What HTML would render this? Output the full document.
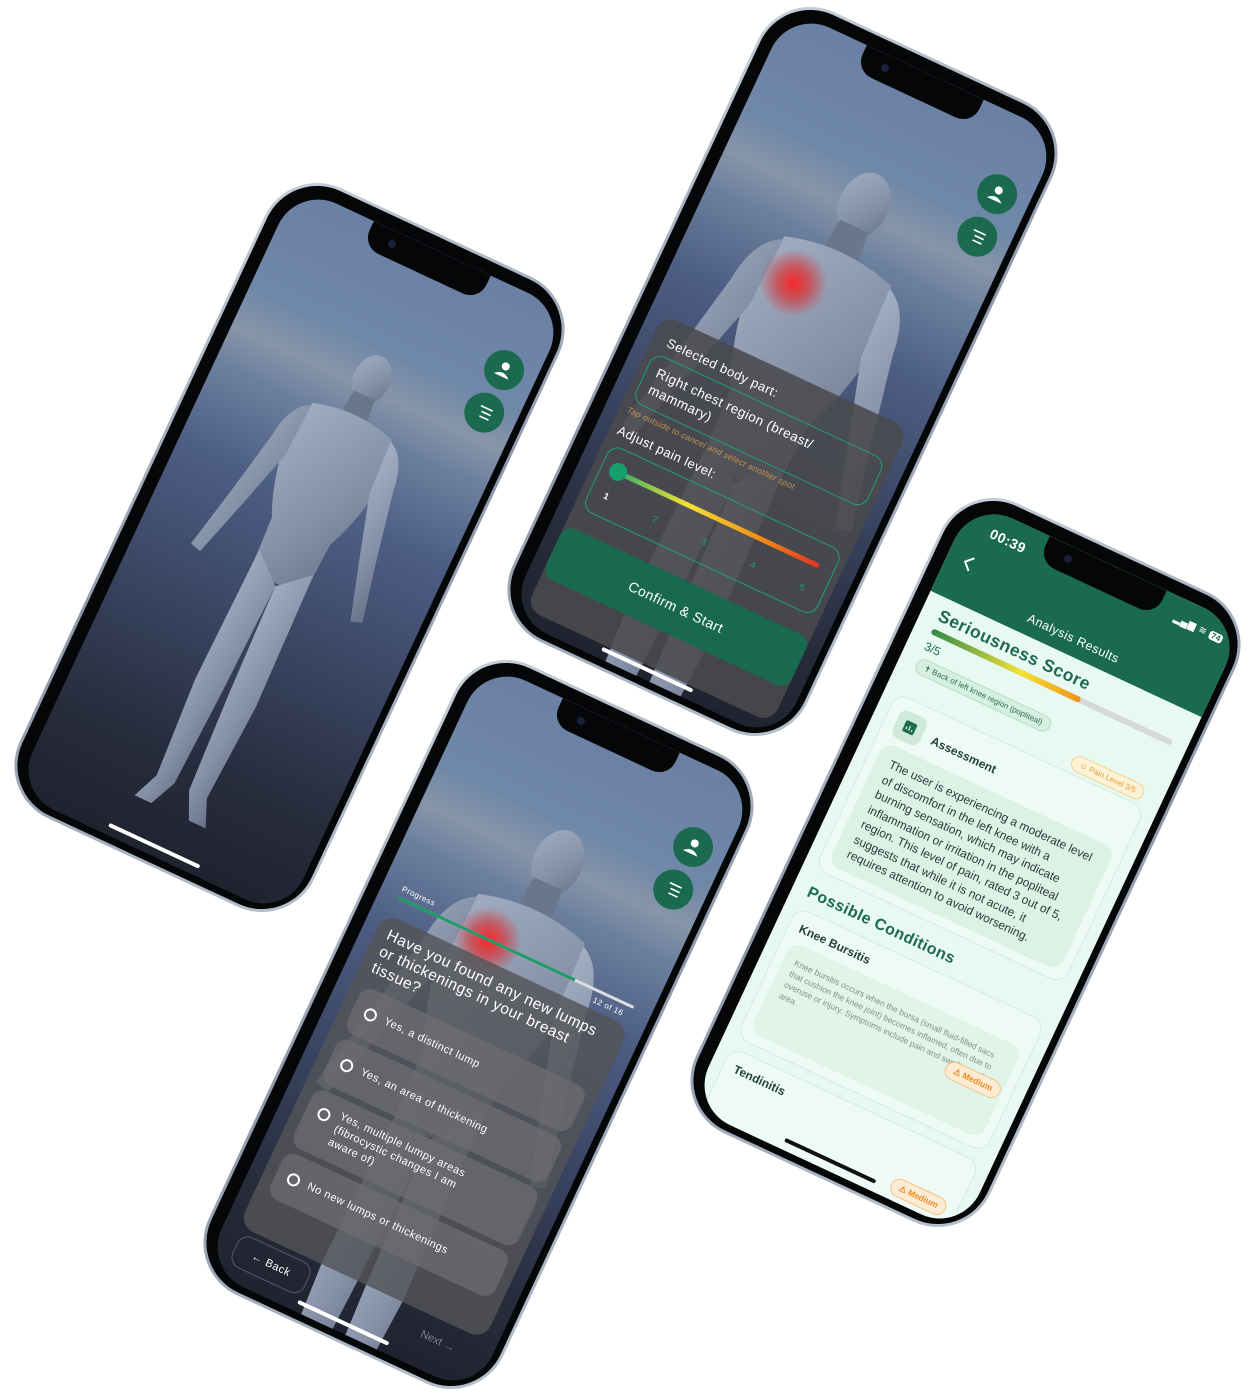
<!DOCTYPE html>
<html><head><meta charset="utf-8">
<style>
*{box-sizing:border-box;margin:0;padding:0}
html,body{width:1258px;height:1398px;overflow:hidden}
body{background:#fff;position:relative;font-family:"Liberation Sans",sans-serif}
.phone{position:absolute;width:325px;height:695px;border-radius:58px;background:linear-gradient(135deg,#c9d1dc,#8d98a9 50%,#b8c2cf);transform:rotate(25deg);transform-origin:50% 50%}
.body{position:absolute;inset:3px;border-radius:55px;background:#050608}
.screen{position:absolute;left:13px;top:13px;width:299px;height:669px;border-radius:44px;overflow:hidden}
.notch{position:absolute;left:85px;top:0;width:129px;height:28px;background:#050608;border-radius:0 0 18px 18px;z-index:20}
.notch:after{content:"";position:absolute;left:22px;top:9px;width:8px;height:8px;border-radius:50%;background:#1a1f3a}
.sky{background:linear-gradient(180deg,#6a80a4 0%,#7088a8 17%,#8795a8 23%,#6c809e 29%,#4d5e84 42%,#38435f 65%,#272c3c 85%,#20232f 100%)}
.home{position:absolute;left:100px;bottom:8px;width:100px;height:4px;border-radius:2px;background:#fff;z-index:20}
.fab{position:absolute;width:40px;height:40px;border-radius:50%;background:#1b6a50;z-index:10}
.abs{position:absolute}
.w{color:#fff;letter-spacing:.5px}
</style></head><body>

<svg width="0" height="0" style="position:absolute">
<defs>
<linearGradient id="fg" x1="0" y1="0" x2="1" y2="1"><stop offset="0" stop-color="#a3aec2"/><stop offset=".6" stop-color="#8590a6"/><stop offset="1" stop-color="#67728a"/></linearGradient>
<g id="man">
<ellipse cx="100" cy="30" rx="16" ry="22" fill="url(#fg)"/>
<path d="M90,45 L110,45 L112,66 L88,66Z" fill="#6b768a"/>
<path d="M62,70 Q100,58 138,70 L146,110 Q140,150 128,175 L126,215 Q100,236 74,215 L72,175 Q60,150 54,110Z" fill="url(#fg)"/>
<path d="M62,72 Q45,80 42,110 L30,170 L18,225 L28,228 L44,175 L60,120Z" fill="url(#fg)"/>
<path d="M138,72 Q155,80 158,110 L170,170 L182,225 L172,228 L156,175 L140,120Z" fill="url(#fg)"/>
<path d="M74,205 L100,228 L97,330 L93,420 L82,444 L66,444 L76,420 L71,330Z" fill="url(#fg)"/>
<path d="M126,205 L100,228 L103,330 L107,420 L118,444 L134,444 L124,420 L129,330Z" fill="url(#fg)"/>
</g>
<radialGradient id="glow"><stop offset="0" stop-color="#ff2020" stop-opacity=".95"/><stop offset=".5" stop-color="#e02828" stop-opacity=".6"/><stop offset="1" stop-color="#e02828" stop-opacity="0"/></radialGradient>
</defs></svg>

<!-- PHONE 1 -->
<div class="phone" style="left:127px;top:200px">
<div class="body"><div class="screen sky">
<div class="notch"></div>
<svg class="abs" style="left:30px;top:110px" width="240" height="530" viewBox="0 0 200 460"><use href="#man"/></svg>
<div class="fab" style="left:246px;top:60px"><svg width="40" height="40"><circle cx="20" cy="16" r="4" fill="#fff"/><path d="M12,27 Q20,19 28,27Z" fill="#fff"/></svg></div>
<div class="fab" style="left:246px;top:107px"><svg width="40" height="40" stroke="#fff" stroke-width="1.6"><path d="M14,15h13M17,20h10M17,25h10"/></svg></div>
<div class="home"></div>
</div></div></div>

<!-- PHONE 2 -->
<div class="phone" style="left:620px;top:24px">
<div class="body"><div class="screen sky">
<div class="notch"></div>
<svg class="abs" style="left:-5px;top:100px" width="310" height="710" viewBox="0 0 200 460"><use href="#man"/><circle cx="80" cy="95" r="22" fill="url(#glow)"/></svg>
<div class="fab" style="left:246px;top:60px"><svg width="40" height="40"><circle cx="20" cy="16" r="4" fill="#fff"/><path d="M12,27 Q20,19 28,27Z" fill="#fff"/></svg></div>
<div class="fab" style="left:246px;top:107px"><svg width="40" height="40" stroke="#fff" stroke-width="1.6"><path d="M14,15h13M17,20h10M17,25h10"/></svg></div>
<div class="abs" style="left:14px;top:330px;width:271px;height:325px;border-radius:16px;background:rgba(74,74,77,.88)"></div>
<div class="abs w" style="left:30px;top:346px;font-size:13px">Selected body part:</div>
<div class="abs w" style="left:22px;top:368px;width:256px;height:54px;border:1px solid #1fa06f;border-radius:12px;padding:8px 40px 8px 10px;font-size:13.5px;line-height:18px">Right chest region (breast/ mammary)</div>
<div class="abs" style="left:22px;top:426px;font-size:8.5px;font-style:italic;color:#c7924c;letter-spacing:.3px">Tap outside to cancel and select another spot</div>
<div class="abs w" style="left:22px;top:446px;font-size:13px">Adjust pain level:</div>
<div class="abs" style="left:22px;top:469px;width:256px;height:72px;border:1px solid #1fa06f;border-radius:12px">
 <div class="abs" style="left:14px;top:20px;width:225px;height:5px;border-radius:3px;background:linear-gradient(90deg,#2eaa6a,#f2e234 35%,#f39018 70%,#e23222)"></div>
 <div class="abs" style="left:8px;top:13px;width:18px;height:18px;border-radius:50%;background:#16a06e"></div>
 <div class="abs w" style="left:14px;top:44px;font-size:9px;font-weight:bold">1</div>
 <div class="abs" style="left:68px;top:44px;font-size:9px;color:#1fa06f">2</div>
 <div class="abs" style="left:122px;top:44px;font-size:9px;color:#1fa06f">3</div>
 <div class="abs" style="left:176px;top:44px;font-size:9px;color:#1fa06f">4</div>
 <div class="abs" style="left:230px;top:44px;font-size:9px;color:#1fa06f">5</div>
</div>
<div class="abs w" style="left:14px;top:562px;width:271px;height:56px;border-radius:12px;background:#19694f;text-align:center;line-height:56px;font-size:14px">Confirm &amp; Start</div>
<div class="home"></div>
</div></div></div>

<!-- PHONE 3 -->
<div class="phone" style="left:316px;top:677px">
<div class="body"><div class="screen sky">
<div class="notch"></div>
<svg class="abs" style="left:-5px;top:105px" width="310" height="710" viewBox="0 0 200 460"><use href="#man"/><circle cx="80" cy="95" r="22" fill="url(#glow)"/></svg>
<div class="fab" style="left:246px;top:60px"><svg width="40" height="40"><circle cx="20" cy="16" r="4" fill="#fff"/><path d="M12,27 Q20,19 28,27Z" fill="#fff"/></svg></div>
<div class="fab" style="left:246px;top:107px"><svg width="40" height="40" stroke="#fff" stroke-width="1.6"><path d="M14,15h13M17,20h10M17,25h10"/></svg></div>
<div class="abs w" style="left:20px;top:236px;font-size:8px">Progress</div>
<div class="abs" style="left:20px;top:249px;width:260px;height:3px;background:#ddd;border-radius:2px"><div style="width:75%;height:3px;background:#1c9a68"></div></div>
<div class="abs w" style="left:240px;top:256px;font-size:8px">12 of 16</div>
<div class="abs" style="left:14px;top:270px;width:271px;height:345px;border-radius:16px;background:rgba(84,84,88,.82)"></div>
<div class="abs w" style="left:26px;top:280px;width:235px;font-size:15.5px;line-height:18px">Have you found any new lumps or thickenings in your breast tissue?</div>
<div class="abs" style="left:26px;top:344px;width:248px;height:50px;border-radius:12px;background:rgba(110,110,114,.7)"></div>
<div class="abs" style="left:26px;top:400px;width:248px;height:50px;border-radius:12px;background:rgba(110,110,114,.7)"></div>
<div class="abs" style="left:26px;top:456px;width:248px;height:64px;border-radius:12px;background:rgba(110,110,114,.7)"></div>
<div class="abs" style="left:26px;top:526px;width:248px;height:50px;border-radius:12px;background:rgba(110,110,114,.7)"></div>
<div class="abs" style="left:38px;top:362px;width:13px;height:13px;border:2px solid #fff;border-radius:50%"></div>
<div class="abs w" style="left:60px;top:362px;font-size:11px">Yes, a distinct lump</div>
<div class="abs" style="left:38px;top:418px;width:13px;height:13px;border:2px solid #fff;border-radius:50%"></div>
<div class="abs w" style="left:60px;top:418px;font-size:11px">Yes, an area of thickening</div>
<div class="abs" style="left:38px;top:472px;width:13px;height:13px;border:2px solid #fff;border-radius:50%"></div>
<div class="abs w" style="left:60px;top:466px;width:170px;font-size:11px;line-height:14px">Yes, multiple lumpy areas (fibrocystic changes I am aware of)</div>
<div class="abs" style="left:38px;top:544px;width:13px;height:13px;border:2px solid #fff;border-radius:50%"></div>
<div class="abs w" style="left:60px;top:544px;font-size:11px">No new lumps or thickenings</div>
<div class="abs w" style="left:20px;top:620px;width:80px;height:34px;border:1px solid #555b66;border-radius:12px;font-size:11px;line-height:32px;text-align:center">← Back</div>
<div class="abs" style="left:225px;top:630px;font-size:11px;color:#7c818a">Next →</div>
<div class="home"></div>
</div></div></div>

<!-- PHONE 4 -->
<div class="phone" style="left:803px;top:515px">
<div class="body"><div class="screen" style="background:#e8f9f1">
<div class="notch"></div>
<div class="abs" style="left:0;top:0;width:299px;height:100px;background:#1a6a50"></div>
<div class="abs w" style="left:30px;top:14px;font-size:14px;font-weight:bold">00:39</div>
<div class="abs w" style="left:232px;top:16px;font-size:10px">▂▄▆ ≋ <span style="background:#fff;color:#1a6a50;border-radius:3px;padding:0 2px;font-size:8px;font-weight:bold">74</span></div>
<svg class="abs" style="left:16px;top:50px" width="14" height="18"><path d="M10,2 L3,9 L10,16" stroke="#fff" stroke-width="2" fill="none"/></svg>
<div class="abs w" style="left:0;top:76px;width:299px;text-align:center;font-size:12.5px">Analysis Results</div>
<div class="abs" style="left:18px;top:108px;font-size:17.5px;font-weight:bold;color:#1d6a4e;letter-spacing:.5px">Seriousness Score</div>
<div class="abs" style="left:18px;top:133px;width:265px;height:6px;border-radius:3px;background:#d6d9d9"><div style="width:62%;height:6px;border-radius:3px;background:linear-gradient(90deg,#2e8a4a,#f2e234 60%,#f39018)"></div></div>
<div class="abs" style="left:18px;top:145px;font-size:12px;color:#1d6a4e">3/5</div>
<div class="abs" style="left:18px;top:164px;padding:3px 8px;border:1px solid #b6dcc9;background:#d6efe3;border-radius:10px;font-size:8px;color:#2f6d55">✝ Back of left knee region (popliteal)</div>
<div class="abs" style="left:200px;top:186px;padding:3px 8px;border:1px solid #f3d493;background:#fcf2d6;border-radius:10px;font-size:8px;color:#e59c2b">☺ Pain Level 3/5</div>
<div class="abs" style="left:12px;top:206px;width:275px;height:195px;border:1px solid #d3ece0;background:#eefbf5;border-radius:14px"></div>
<div class="abs" style="left:24px;top:218px;width:30px;height:30px;border-radius:8px;background:#cfe9dc"><svg width="30" height="30"><rect x="9" y="9" width="12" height="12" rx="2" fill="#1d6a4e"/><path d="M12,18v-3M15,18v-5M18,18v-2" stroke="#cfe9dc" stroke-width="1.3"/></svg></div>
<div class="abs" style="left:64px;top:228px;font-size:12px;font-weight:bold;color:#24413a">Assessment</div>
<div class="abs" style="left:22px;top:256px;width:255px;height:135px;border-radius:12px;background:#dcf2e7;padding:10px 14px;font-size:12px;line-height:16.5px;color:#2b3a35">The user is experiencing a moderate level of discomfort in the left knee with a burning sensation, which may indicate inflammation or irritation in the popliteal region. This level of pain, rated 3 out of 5, suggests that while it is not acute, it requires attention to avoid worsening.</div>
<div class="abs" style="left:16px;top:416px;font-size:16px;font-weight:bold;color:#1d6a4e;letter-spacing:.4px">Possible Conditions</div>
<div class="abs" style="left:12px;top:442px;width:275px;height:145px;border:1px solid #d3ece0;background:#eefbf5;border-radius:14px"></div>
<div class="abs" style="left:24px;top:454px;font-size:12px;font-weight:bold;color:#24413a">Knee Bursitis</div>
<div class="abs" style="left:22px;top:476px;width:255px;height:100px;border-radius:12px;background:#e1f4ea;padding:12px 12px;font-size:8.5px;line-height:12px;color:#7f918a">Knee bursitis occurs when the bursa (small fluid-filled sacs that cushion the knee joint) becomes inflamed, often due to overuse or injury. Symptoms include pain and swelling in the area.</div>
<div class="abs" style="left:215px;top:516px;padding:3px 8px;border:1px solid #f3c38a;background:#fdebd3;border-radius:10px;font-size:8.5px;font-weight:bold;color:#ee8a1c">⚠ Medium</div>
<div class="abs" style="left:12px;top:597px;width:275px;height:90px;border:1px solid #d3ece0;background:#eefbf5;border-radius:14px"></div>
<div class="abs" style="left:24px;top:609px;font-size:12px;font-weight:bold;color:#24413a">Tendinitis</div>
<div class="abs" style="left:215px;top:645px;padding:3px 8px;border:1px solid #f3c38a;background:#fdebd3;border-radius:10px;font-size:8.5px;font-weight:bold;color:#ee8a1c">⚠ Medium</div>
<div class="home" style="background:#111"></div>
</div></div></div>

</body></html>
